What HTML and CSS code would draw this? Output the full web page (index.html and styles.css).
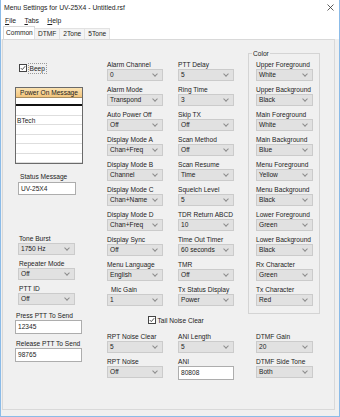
FILE: index.html
```html
<!DOCTYPE html>
<html>
<head>
<meta charset="utf-8">
<title>Menu Settings</title>
<link rel="stylesheet" href="styles.css">
</head>
<body>
<div class="window">
  <div class="titlebar">
    <span>Menu Settings for UV-25X4 - Untitled.rsf</span>
    <svg class="close" width="7" height="7" viewBox="0 0 7 7"><path d="M0.5 0.5L6.5 6.5M6.5 0.5L0.5 6.5" stroke="#333" stroke-width="0.8"/></svg>
  </div>
  <div class="menubar"><span><u>F</u>ile</span><span><u>T</u>abs</span><span><u>H</u>elp</span></div>
  <div class="tabstrip">
    <span class="tab active">Common</span><span class="tab">DTMF</span><span class="tab">2Tone</span><span class="tab">5Tone</span>
  </div>
  <div class="panel">
    <div class="col col-l">
      <div class="check beep">
        <span class="box"><svg width="6" height="6" viewBox="0 0 6 6"><path d="M0.8 3.1L2.3 4.6L5.2 1.2" fill="none" stroke="#222" stroke-width="0.8"/></svg></span>
        <span class="focus">Beep</span>
      </div>
      <div class="grid">
        <div class="grid-head">Power On Message</div>
        <div class="grid-edit"></div>
        <div class="grid-row"></div>
        <div class="grid-row">BTech</div>
        <div class="grid-row"></div>
        <div class="grid-row"></div>
        <div class="grid-row"></div>
        <div class="grid-row"></div>
      </div>
      <div class="lbl status-lbl">Status Message</div>
      <div class="txt status-txt">UV-25X4</div>
      <div class="field tone"><div class="lbl">Tone Burst</div><div class="sel">1750 Hz</div></div>
      <div class="field lfield"><div class="lbl">Repeater Mode</div><div class="sel">Off</div></div>
      <div class="field lfield"><div class="lbl">PTT ID</div><div class="sel">Off</div></div>
      <div class="lbl press-lbl">Press PTT To Send</div>
      <div class="txt wide">12345</div>
      <div class="lbl release-lbl">Release PTT To Send</div>
      <div class="txt wide">98765</div>
    </div>

    <div class="col col-m1">
      <div class="field"><div class="lbl">Alarm Channel</div><div class="sel">0</div></div>
      <div class="field"><div class="lbl">Alarm Mode</div><div class="sel">Transpond</div></div>
      <div class="field"><div class="lbl">Auto Power Off</div><div class="sel">Off</div></div>
      <div class="field"><div class="lbl">Display Mode A</div><div class="sel">Chan+Freq</div></div>
      <div class="field"><div class="lbl">Display Mode B</div><div class="sel">Channel</div></div>
      <div class="field"><div class="lbl">Display Mode C</div><div class="sel">Chan+Name</div></div>
      <div class="field"><div class="lbl">Display Mode D</div><div class="sel">Chan+Freq</div></div>
      <div class="field"><div class="lbl">Display Sync</div><div class="sel">Off</div></div>
      <div class="field"><div class="lbl">Menu Language</div><div class="sel">English</div></div>
      <div class="field"><div class="lbl indent">Mic Gain</div><div class="sel">1</div></div>
      <div class="check tail">
        <span class="box"><svg width="6" height="6" viewBox="0 0 6 6"><path d="M0.8 3.1L2.3 4.6L5.2 1.2" fill="none" stroke="#222" stroke-width="0.8"/></svg></span>
        <span>Tail Noise Clear</span>
      </div>
      <div class="field after-check"><div class="lbl">RPT Noise Clear</div><div class="sel">5</div></div>
      <div class="field"><div class="lbl">RPT Noise</div><div class="sel">Off</div></div>
    </div>

    <div class="col col-m2">
      <div class="field"><div class="lbl">PTT Delay</div><div class="sel">5</div></div>
      <div class="field"><div class="lbl">Ring Time</div><div class="sel">3</div></div>
      <div class="field"><div class="lbl">Skip TX</div><div class="sel">Off</div></div>
      <div class="field"><div class="lbl">Scan Method</div><div class="sel">Off</div></div>
      <div class="field"><div class="lbl">Scan Resume</div><div class="sel">Time</div></div>
      <div class="field"><div class="lbl">Squelch Level</div><div class="sel">5</div></div>
      <div class="field"><div class="lbl">TDR Return ABCD</div><div class="sel">10</div></div>
      <div class="field"><div class="lbl">Time Out Timer</div><div class="sel">60 seconds</div></div>
      <div class="field"><div class="lbl">TMR</div><div class="sel">Off</div></div>
      <div class="field"><div class="lbl">Tx Status Display</div><div class="sel">Power</div></div>
      <div class="field ani-len"><div class="lbl">ANI Length</div><div class="sel">5</div></div>
      <div class="field"><div class="lbl">ANI</div><div class="txt">80808</div></div>
    </div>

    <div class="col col-c">
      <div class="group">
        <div class="legend">Color</div>
        <div class="field first"><div class="lbl">Upper Foreground</div><div class="sel">White</div></div>
        <div class="field"><div class="lbl">Upper Background</div><div class="sel">Black</div></div>
        <div class="field"><div class="lbl">Main Foreground</div><div class="sel">White</div></div>
        <div class="field"><div class="lbl">Main Background</div><div class="sel">Blue</div></div>
        <div class="field"><div class="lbl">Menu Foreground</div><div class="sel">Yellow</div></div>
        <div class="field"><div class="lbl">Menu Background</div><div class="sel">Black</div></div>
        <div class="field"><div class="lbl">Lower Foreground</div><div class="sel">Green</div></div>
        <div class="field"><div class="lbl">Lower Background</div><div class="sel">Black</div></div>
        <div class="field"><div class="lbl">Rx Character</div><div class="sel">Green</div></div>
        <div class="field"><div class="lbl">Tx Character</div><div class="sel">Red</div></div>
      </div>
      <div class="field dtmf-gain"><div class="lbl">DTMF Gain</div><div class="sel">20</div></div>
      <div class="field dtmf"><div class="lbl">DTMF Side Tone</div><div class="sel">Both</div></div>
    </div>
  </div>
</div>
</body>
</html>
```

FILE: styles.css
```css
* { box-sizing: border-box; }

body {
  margin: 0;
  font-family: "Liberation Sans", Arial, sans-serif;
  font-size: 6.6px;
  color: #1c1c1c;
}

.window {
  width: 340px;
  height: 417px;
  border: 1px solid #8bbbe8;
  border-top: 0;
  background: #f0f0f0;
  display: flex;
  flex-direction: column;
  overflow: hidden;
}

.titlebar {
  height: 14px;
  background: #fff;
  display: flex;
  align-items: center;
  justify-content: space-between;
  padding: 0 5px 0 3px;
  font-size: 6.8px;
  color: #222;
}

.menubar {
  height: 12px;
  background: #fff;
  display: flex;
  align-items: center;
  gap: 8.5px;
  padding-left: 4px;
  font-size: 6.8px;
}

.tabstrip {
  height: 13px;
  background: #fff;
  display: flex;
  align-items: flex-end;
  padding-left: 2px;
  font-size: 6.6px;
}

.tab {
  height: 11px;
  line-height: 10px;
  padding: 0 3px 0 3px;
  background: #f4f4f4;
  border: 1px solid #e2e2e2;
  border-bottom: 0;
  margin-left: -1px;
}

.tab.active {
  height: 13px;
  line-height: 12px;
  padding: 0 2px;
  width: 32px;
  background: #fff;
  border-color: #d9d9d9;
  margin-left: 0;
}

.panel {
  flex: 1;
  margin: 0 4px 6px 1px;
  border: 1px solid #d9d9d9;
  background: #f0f0f0;
  display: flex;
  align-items: flex-start;
}

.col { display: flex; flex-direction: column; }

.lbl {
  height: 9px;
  line-height: 9px;
  white-space: nowrap;
}

.sel {
  position: relative;
  height: 12px;
  line-height: 10px;
  padding-left: 2px;
  background: #e1e1e1;
  border: 1px solid #cbcbcb;
  white-space: nowrap;
}

.sel::after {
  content: "";
  position: absolute;
  right: 5px;
  top: 2.5px;
  width: 3px;
  height: 3px;
  border-right: 1px solid #8c8c8c;
  border-bottom: 1px solid #8c8c8c;
  transform: rotate(45deg);
}

.txt {
  height: 14px;
  line-height: 12px;
  padding-left: 2px;
  background: #fff;
  border: 1px solid #adadad;
  white-space: nowrap;
}

.field { display: flex; flex-direction: column; margin-top: 4px; }

/* left column */
.col-l { width: 68px; margin-left: 12px; padding-top: 24px; }

.check {
  display: flex;
  align-items: center;
  height: 8px;
  white-space: nowrap;
}

.box {
  width: 8px;
  height: 8px;
  border: 1px solid #444;
  background: #fff;
  display: flex;
  align-items: center;
  justify-content: center;
  margin-right: 1.5px;
}

.beep { margin-left: 4px; }

.focus {
  outline: 1px dotted #9a9a9a;
  height: 9px;
  line-height: 9px;
  padding: 0 1px;
}

.grid {
  margin-top: 15px;
  height: 77px;
  border: 1px solid #6a6a6a;
  background: #fff;
  overflow: hidden;
}

.grid-head {
  height: 10px;
  line-height: 9px;
  text-align: center;
  background: linear-gradient(#fbe2b0, #f2c47c);
  border-bottom: 1px solid #a88d60;
}

.grid-edit {
  height: 8px;
  border-bottom: 2px solid #111;
}

.grid-row {
  height: 9.5px;
  line-height: 9px;
  padding-left: 1px;
  border-bottom: 1px solid #dedede;
}

.status-lbl { margin-top: 7.5px; margin-left: 5px; }
.status-txt { margin-top: 1.5px; margin-left: 3px; width: 58px; height: 13px; line-height: 11px; }

.tone { margin-top: 38.5px; }
.col-l .field { margin-left: 3px; width: 57px; }
.col-l .field .lbl { padding-left: 1px; }

.press-lbl { margin-top: 6px; margin-left: 1px; }
.release-lbl { margin-top: 5px; margin-left: 1px; }
.txt.wide { width: 67px; }

/* middle columns */
.col-m1 { width: 56px; margin-left: 24px; padding-top: 15.5px; }
.col-m2 { width: 56px; margin-left: 15px; padding-top: 15.5px; }

.indent { padding-left: 4px; }

.tail { margin-left: 41px; margin-top: 10.5px; }
.after-check { margin-top: 7.5px; }
.ani-len { margin-top: 26px; }

/* color column */
.col-c { width: 72px; margin-left: 14px; padding-top: 13px; }

.group {
  border: 1px solid #d4d4d4;
  padding: 0 6px 7.5px 7px;
}

.legend {
  width: fit-content;
  margin-top: -5.5px;
  margin-left: -4px;
  padding: 0 1px;
  height: 9px;
  line-height: 9px;
  background: #f0f0f0;
}

.group .field.first { margin-top: 2px; }

.col-c > .field { margin-left: 8px; width: 57px; }
.dtmf-gain { margin-top: 17.5px !important; }
```
